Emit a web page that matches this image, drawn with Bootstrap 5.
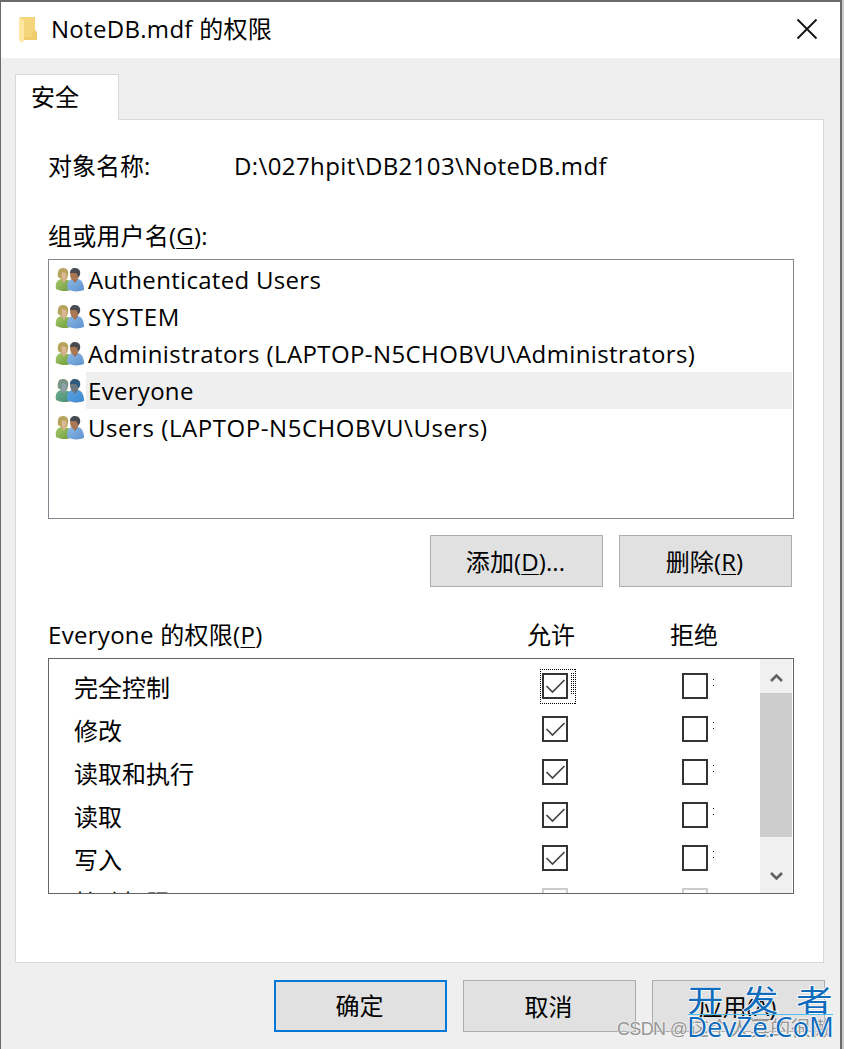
<!DOCTYPE html>
<html lang="zh-CN">
<head>
<meta charset="utf-8">
<title>NoteDB.mdf 的权限</title>
<link href="https://cdn.jsdelivr.net/npm/bootstrap@5.3.0/dist/css/bootstrap.min.css" rel="stylesheet">
<style>
body{width:844px;height:1049px;background:#c8c9ca;color:#000;overflow:hidden;font:24px/40px "Open Sans","Noto Sans CJK SC",sans-serif;letter-spacing:.4px}
.zh{letter-spacing:0}
.dialog{width:842px;height:1049px;background:#efefef;border:solid #6c6a6b;border-width:2px 2px 0 1px}
.title-row{height:56px;padding:0 22px 0 16px}
.title-row .caption{margin-left:14px;margin-top:-3px;letter-spacing:.3px}
.tab-head{width:104px;height:46px;margin:16px 0 0 14px;border:1px solid #d9d9d9;border-bottom:0;padding:2px 15px;z-index:1}
.tab-page{width:809px;height:844px;margin:-1px 0 0 14px;border:1px solid #d9d9d9;padding:26px 0 0 32px}
.object-name{height:40px}
.object-name .field-label{width:186px}
.groups-label{margin-top:30px;height:43px;letter-spacing:.2px}
.sheet-list{width:746px;height:260px;border:1px solid #828790;padding:1px 1px 0 6px}
.entry{height:37px}
.entry svg{flex:none;margin-right:2px}
.entry .who{padding-left:2px;line-height:37px;height:37px;white-space:nowrap}
.entry.chosen .who{background:#efefef}
.entry.chosen svg{filter:url(#picked)}
.push{width:173px;height:52px;background:#e1e1e1;border:1px solid #adadad;border-radius:0;font-size:24px;line-height:40px;color:#000;padding:1px 2px 0 0;letter-spacing:.1px}
.push.primary{border:2px solid #0078d7;padding-top:0}
.edit-buttons{width:744px;margin-top:16px}
u{text-underline-offset:3px;text-decoration-thickness:1px}
.perm-head{margin-top:28px;height:43px;width:746px}
.perm-head .subject{width:479px;letter-spacing:.3px}
.perm-head .allow{width:143px}
.perm-box{width:746px;height:236px;border:1px solid #646464}
.perm-rows{padding-top:6px;width:711px}
.perm{height:43px}
.perm .what{width:493px;padding-left:25px;line-height:45px}
.box{width:26px;height:26px;border:2px solid #333;margin-top:8px;background:#fff}
.box svg{display:block}
.box.dim{border-color:#ccc}
.deny{margin-left:114px}
.ticks{width:1px;height:7px;margin:14px 0 0 5px;background:linear-gradient(#000 1px,transparent 1px 6px,#000 6px)}
.scrollbar-win{width:32px;background:#f0f0f0;margin-right:1px}
.thumb{height:144px;background:#cdcdcd}
.footer{padding:17px 0 0 273px}
.stamp{left:610px;top:975px;width:234px;height:74px}
.stamp .han{font-family:"Noto Sans CJK SC",sans-serif}
</style>
</head>
<body>
<svg width="0" height="0" class="position-absolute">
<defs>
<filter id="soft" x="-10%" y="-10%" width="120%" height="120%"><feGaussianBlur stdDeviation=".35"/></filter>
<filter id="picked" color-interpolation-filters="sRGB"><feColorMatrix values=".65 0 0 0 0  0 .65 0 .165 0  0 0 .65 .29 0  0 0 0 1 0"/></filter>
<linearGradient id="green" x2="1" y2="1"><stop offset="0" stop-color="#a6c968"/><stop offset="1" stop-color="#6f9a3c"/></linearGradient>
<linearGradient id="blue" x2="1" y2="1"><stop offset="0" stop-color="#8db8e4"/><stop offset="1" stop-color="#5d93cf"/></linearGradient>
<symbol id="users" viewBox="0 0 29 26">
<g filter="url(#soft)">
<path d="M1 22C0 16 2 13 6 12l7 1c3 2 3 6 2 10-4 2-10 1-14-1z" fill="url(#green)"/>
<path d="M3 10C2 4 4 1 8 1s6 3 5 7l-1 4-4 1z" fill="#b7a45c"/>
<path d="M7 5l4 1c1 3 0 6-2 7-2 0-3-3-2-8z" fill="#dcb896"/>
<path d="M6 12l3 4 2-3-1-2z" fill="#d5b08d"/>
<path d="M12 22c0-6 1-9 5-10l6 0c4 1 6 5 6 11-5 2-12 2-17-1z" fill="url(#blue)"/>
<path d="M17 12l3 4 3-4-1-3h-4z" fill="#996746"/>
<path d="M15 6c0 4 1 7 4 8 3 0 5-4 5-8l-4-3z" fill="#a97752"/>
<path d="M15 6c0-3 2-5 5-5 4 0 6 3 5 7l-2 3c0-3-1-5-3-5z" fill="#484c52"/>
</g>
</symbol>
<symbol id="check" viewBox="0 0 22 22"><path d="M2.500 11l6 6L20.500 5" fill="none" stroke="#444" stroke-width="1.700"/></symbol>
</defs>
</svg>
<div class="dialog position-relative">
<header class="title-row bg-white d-flex align-items-center">
<svg width="20" height="28" viewBox="0 0 20 28"><path d="M3 1h15v13l2 2v8H5z" fill="#efcb69"/><path d="M5 1h13v12l-4 8H6z" fill="#f5d57c"/><path d="M2 1l5 3v20l-2 3-3-3z" fill="#ffe6a2"/></svg>
<span class="caption me-auto">NoteDB.mdf 的权限</span>
<svg width="22" height="22" viewBox="0 0 22 22" style="margin-top:-2px"><path d="M1.500 1.500l19 19m0-19l-19 19" stroke="#111" stroke-width="1.800"/></svg>
</header>
<div class="tab-head bg-white position-relative zh">安全</div>
<main class="tab-page bg-white">
<div class="object-name d-flex"><span class="field-label zh">对象名称:</span><span>D:\027hpit\DB2103\NoteDB.mdf</span></div>
<div class="groups-label">组或用户名(<u>G</u>):</div>
<div class="sheet-list">
<div class="entry d-flex"><svg width="29" height="35"><use href="#users" y="6" width="29" height="26"/></svg><span class="who flex-fill" style="letter-spacing:.3px">Authenticated Users</span></div>
<div class="entry d-flex"><svg width="29" height="35"><use href="#users" y="6" width="29" height="26"/></svg><span class="who flex-fill" style="letter-spacing:.7px">SYSTEM</span></div>
<div class="entry d-flex"><svg width="29" height="35"><use href="#users" y="6" width="29" height="26"/></svg><span class="who flex-fill">Administrators (LAPTOP-N5CHOBVU\Administrators)</span></div>
<div class="entry chosen d-flex"><svg width="29" height="35"><use href="#users" y="6" width="29" height="26"/></svg><span class="who flex-fill" style="letter-spacing:.3px">Everyone</span></div>
<div class="entry d-flex"><svg width="29" height="35"><use href="#users" y="6" width="29" height="26"/></svg><span class="who flex-fill" style="letter-spacing:.56px">Users (LAPTOP-N5CHOBVU\Users)</span></div>
</div>
<div class="edit-buttons d-flex justify-content-end gap-3">
<button class="btn push">添加(<u>D</u>)...</button><button class="btn push">删除(<u>R</u>)</button>
</div>
<div class="perm-head d-flex"><span class="subject">Everyone 的权限(<u>P</u>)</span><span class="allow zh">允许</span><span class="zh">拒绝</span></div>
<div class="perm-box d-flex overflow-hidden zh">
<div class="perm-rows">
<div class="perm d-flex"><span class="what">完全控制</span><div class="box position-relative"><svg width="22" height="22"><use href="#check"/></svg>
<svg class="position-absolute" style="left:-4px;top:-6px" width="36" height="35"><path d="M0 .5h36M0 34.500h36M.5 0v35M35.500 0v35M31.500 4v22M33.500 4v22" stroke="#000" stroke-dasharray="1 1"/></svg></div><div class="box deny"></div><i class="ticks"></i></div>
<div class="perm d-flex"><span class="what">修改</span><div class="box"><svg width="22" height="22"><use href="#check"/></svg></div><div class="box deny"></div><i class="ticks"></i></div>
<div class="perm d-flex"><span class="what">读取和执行</span><div class="box"><svg width="22" height="22"><use href="#check"/></svg></div><div class="box deny"></div><i class="ticks"></i></div>
<div class="perm d-flex"><span class="what">读取</span><div class="box"><svg width="22" height="22"><use href="#check"/></svg></div><div class="box deny"></div><i class="ticks"></i></div>
<div class="perm d-flex"><span class="what">写入</span><div class="box"><svg width="22" height="22"><use href="#check"/></svg></div><div class="box deny"></div><i class="ticks"></i></div>
<div class="perm d-flex"><span class="what">特殊权限</span><div class="box dim"></div><div class="box dim deny"></div></div>
</div>
<div class="scrollbar-win">
<svg class="d-block" width="32" height="34"><path d="M11 22l5.500-5.500L22 22" fill="none" stroke="#606060" stroke-width="2.600"/></svg>
<div class="thumb"></div>
<svg class="d-block" width="32" height="56"><path d="M11 36l5.500 5.500L22 36" fill="none" stroke="#606060" stroke-width="2.600"/></svg>
</div>
</div>
</main>
<footer class="footer d-flex gap-3">
<button class="btn push primary">确定</button><button class="btn push">取消</button><button class="btn push">应用(<u>A</u>)</button>
</footer>
</div>
<svg class="stamp position-absolute zh" viewBox="610 975 234 74">
<g fill="#969696" stroke="#f6f6f6" stroke-width="1" paint-order="stroke">
<text x="617" y="1035" font-size="18" textLength="71" font-family="Liberation Sans">CSDN @</text>
<text class="han" x="689" y="1036" font-size="20" textLength="142">这个人真的很懒</text>
</g>
<g fill="#0f6cbd" stroke="#fff" stroke-width="1.500" paint-order="stroke">
<g class="han" font-size="30"><text transform="translate(687 1011) scale(1.22 1)">开</text><text transform="translate(742 1011) scale(1.22 1)">发</text><text transform="translate(796 1011) scale(1.22 1)">者</text></g>
<text x="687" y="1037" font-size="27" textLength="147" lengthAdjust="spacingAndGlyphs" font-family="Open Sans">DevZe.CoM</text>
</g>
<path d="M688 1014.500h145" stroke="#55bdf0"/>
</svg>
<script src="https://cdn.jsdelivr.net/npm/bootstrap@5.3.0/dist/js/bootstrap.bundle.min.js"></script>
</body>
</html>
